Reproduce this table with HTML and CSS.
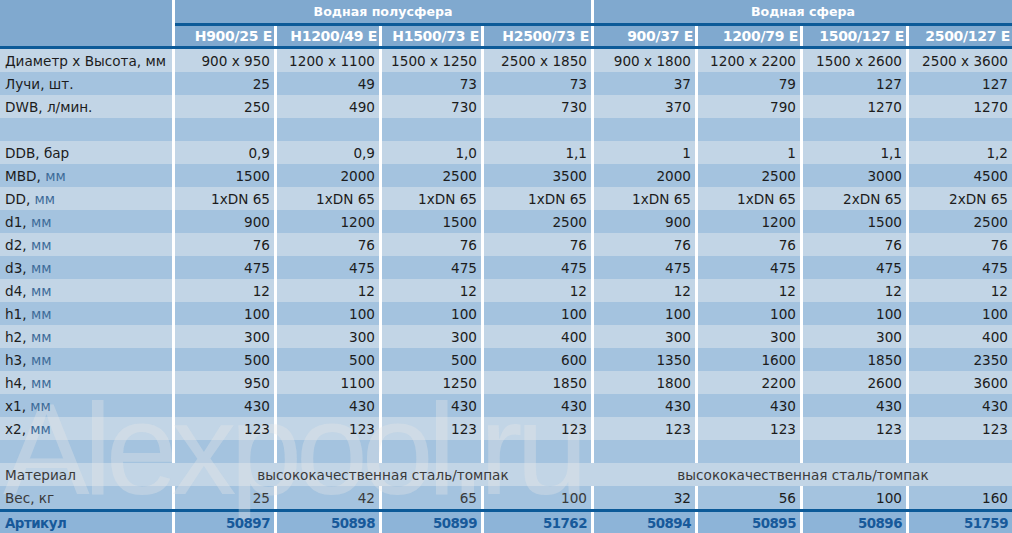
FILE: index.html
```html
<!DOCTYPE html>
<html lang="ru">
<head>
<meta charset="utf-8">
<title>Водная сфера</title>
<link rel="stylesheet" href="styles.css">
</head>
<body>
<div class="table">
  <div class="row head1">
    <div class="cell"></div>
    <div class="cell group g1"><span class="t">Водная полусфера</span></div>
    <div class="cell group g2"><span class="t">Водная сфера</span></div>
  </div>
  <div class="row line-partial">
    <div class="cell hdbg"></div>
    <div class="cell dark"></div>
  </div>
  <div class="row head2">
    <div class="cell"></div>
    <div class="cell"><span class="t">H900/25 E</span></div>
    <div class="cell"><span class="t">H1200/49 E</span></div>
    <div class="cell"><span class="t">H1500/73 E</span></div>
    <div class="cell"><span class="t">H2500/73 E</span></div>
    <div class="cell"><span class="t">900/37 E</span></div>
    <div class="cell"><span class="t">1200/79 E</span></div>
    <div class="cell"><span class="t">1500/127 E</span></div>
    <div class="cell"><span class="t">2500/127 E</span></div>
  </div>
  <div class="line"></div>

  <div class="row light">
    <div class="cell label"><span class="t">Диаметр x Высота, мм</span></div>
    <div class="cell"><span class="t">900 x 950</span></div>
    <div class="cell"><span class="t">1200 x 1100</span></div>
    <div class="cell"><span class="t">1500 x 1250</span></div>
    <div class="cell"><span class="t">2500 x 1850</span></div>
    <div class="cell"><span class="t">900 x 1800</span></div>
    <div class="cell"><span class="t">1200 x 2200</span></div>
    <div class="cell"><span class="t">1500 x 2600</span></div>
    <div class="cell"><span class="t">2500 x 3600</span></div>
  </div>
  <div class="row darkrow">
    <div class="cell label"><span class="t">Лучи, шт.</span></div>
    <div class="cell"><span class="t">25</span></div>
    <div class="cell"><span class="t">49</span></div>
    <div class="cell"><span class="t">73</span></div>
    <div class="cell"><span class="t">73</span></div>
    <div class="cell"><span class="t">37</span></div>
    <div class="cell"><span class="t">79</span></div>
    <div class="cell"><span class="t">127</span></div>
    <div class="cell"><span class="t">127</span></div>
  </div>
  <div class="row light">
    <div class="cell label"><span class="t">DWB, л/мин.</span></div>
    <div class="cell"><span class="t">250</span></div>
    <div class="cell"><span class="t">490</span></div>
    <div class="cell"><span class="t">730</span></div>
    <div class="cell"><span class="t">730</span></div>
    <div class="cell"><span class="t">370</span></div>
    <div class="cell"><span class="t">790</span></div>
    <div class="cell"><span class="t">1270</span></div>
    <div class="cell"><span class="t">1270</span></div>
  </div>
  <div class="row darkrow">
    <div class="cell label"></div>
    <div class="cell"></div><div class="cell"></div><div class="cell"></div><div class="cell"></div>
    <div class="cell"></div><div class="cell"></div><div class="cell"></div><div class="cell"></div>
  </div>
  <div class="row light">
    <div class="cell label"><span class="t">DDB, бар</span></div>
    <div class="cell"><span class="t">0,9</span></div>
    <div class="cell"><span class="t">0,9</span></div>
    <div class="cell"><span class="t">1,0</span></div>
    <div class="cell"><span class="t">1,1</span></div>
    <div class="cell"><span class="t">1</span></div>
    <div class="cell"><span class="t">1</span></div>
    <div class="cell"><span class="t">1,1</span></div>
    <div class="cell"><span class="t">1,2</span></div>
  </div>
  <div class="row darkrow">
    <div class="cell label"><span class="t">MBD, <span class="unit">мм</span></span></div>
    <div class="cell"><span class="t">1500</span></div>
    <div class="cell"><span class="t">2000</span></div>
    <div class="cell"><span class="t">2500</span></div>
    <div class="cell"><span class="t">3500</span></div>
    <div class="cell"><span class="t">2000</span></div>
    <div class="cell"><span class="t">2500</span></div>
    <div class="cell"><span class="t">3000</span></div>
    <div class="cell"><span class="t">4500</span></div>
  </div>
  <div class="row light">
    <div class="cell label"><span class="t">DD, <span class="unit">мм</span></span></div>
    <div class="cell"><span class="t">1xDN 65</span></div>
    <div class="cell"><span class="t">1xDN 65</span></div>
    <div class="cell"><span class="t">1xDN 65</span></div>
    <div class="cell"><span class="t">1xDN 65</span></div>
    <div class="cell"><span class="t">1xDN 65</span></div>
    <div class="cell"><span class="t">1xDN 65</span></div>
    <div class="cell"><span class="t">2xDN 65</span></div>
    <div class="cell"><span class="t">2xDN 65</span></div>
  </div>
  <div class="row darkrow">
    <div class="cell label"><span class="t">d1, <span class="unit">мм</span></span></div>
    <div class="cell"><span class="t">900</span></div>
    <div class="cell"><span class="t">1200</span></div>
    <div class="cell"><span class="t">1500</span></div>
    <div class="cell"><span class="t">2500</span></div>
    <div class="cell"><span class="t">900</span></div>
    <div class="cell"><span class="t">1200</span></div>
    <div class="cell"><span class="t">1500</span></div>
    <div class="cell"><span class="t">2500</span></div>
  </div>
  <div class="row light">
    <div class="cell label"><span class="t">d2, <span class="unit">мм</span></span></div>
    <div class="cell"><span class="t">76</span></div>
    <div class="cell"><span class="t">76</span></div>
    <div class="cell"><span class="t">76</span></div>
    <div class="cell"><span class="t">76</span></div>
    <div class="cell"><span class="t">76</span></div>
    <div class="cell"><span class="t">76</span></div>
    <div class="cell"><span class="t">76</span></div>
    <div class="cell"><span class="t">76</span></div>
  </div>
  <div class="row darkrow">
    <div class="cell label"><span class="t">d3, <span class="unit">мм</span></span></div>
    <div class="cell"><span class="t">475</span></div>
    <div class="cell"><span class="t">475</span></div>
    <div class="cell"><span class="t">475</span></div>
    <div class="cell"><span class="t">475</span></div>
    <div class="cell"><span class="t">475</span></div>
    <div class="cell"><span class="t">475</span></div>
    <div class="cell"><span class="t">475</span></div>
    <div class="cell"><span class="t">475</span></div>
  </div>
  <div class="row light">
    <div class="cell label"><span class="t">d4, <span class="unit">мм</span></span></div>
    <div class="cell"><span class="t">12</span></div>
    <div class="cell"><span class="t">12</span></div>
    <div class="cell"><span class="t">12</span></div>
    <div class="cell"><span class="t">12</span></div>
    <div class="cell"><span class="t">12</span></div>
    <div class="cell"><span class="t">12</span></div>
    <div class="cell"><span class="t">12</span></div>
    <div class="cell"><span class="t">12</span></div>
  </div>
  <div class="row darkrow">
    <div class="cell label"><span class="t">h1, <span class="unit">мм</span></span></div>
    <div class="cell"><span class="t">100</span></div>
    <div class="cell"><span class="t">100</span></div>
    <div class="cell"><span class="t">100</span></div>
    <div class="cell"><span class="t">100</span></div>
    <div class="cell"><span class="t">100</span></div>
    <div class="cell"><span class="t">100</span></div>
    <div class="cell"><span class="t">100</span></div>
    <div class="cell"><span class="t">100</span></div>
  </div>
  <div class="row light">
    <div class="cell label"><span class="t">h2, <span class="unit">мм</span></span></div>
    <div class="cell"><span class="t">300</span></div>
    <div class="cell"><span class="t">300</span></div>
    <div class="cell"><span class="t">300</span></div>
    <div class="cell"><span class="t">400</span></div>
    <div class="cell"><span class="t">300</span></div>
    <div class="cell"><span class="t">300</span></div>
    <div class="cell"><span class="t">300</span></div>
    <div class="cell"><span class="t">400</span></div>
  </div>
  <div class="row darkrow">
    <div class="cell label"><span class="t">h3, <span class="unit">мм</span></span></div>
    <div class="cell"><span class="t">500</span></div>
    <div class="cell"><span class="t">500</span></div>
    <div class="cell"><span class="t">500</span></div>
    <div class="cell"><span class="t">600</span></div>
    <div class="cell"><span class="t">1350</span></div>
    <div class="cell"><span class="t">1600</span></div>
    <div class="cell"><span class="t">1850</span></div>
    <div class="cell"><span class="t">2350</span></div>
  </div>
  <div class="row light">
    <div class="cell label"><span class="t">h4, <span class="unit">мм</span></span></div>
    <div class="cell"><span class="t">950</span></div>
    <div class="cell"><span class="t">1100</span></div>
    <div class="cell"><span class="t">1250</span></div>
    <div class="cell"><span class="t">1850</span></div>
    <div class="cell"><span class="t">1800</span></div>
    <div class="cell"><span class="t">2200</span></div>
    <div class="cell"><span class="t">2600</span></div>
    <div class="cell"><span class="t">3600</span></div>
  </div>
  <div class="row darkrow">
    <div class="cell label"><span class="t">x1, <span class="unit">мм</span></span></div>
    <div class="cell"><span class="t">430</span></div>
    <div class="cell"><span class="t">430</span></div>
    <div class="cell"><span class="t">430</span></div>
    <div class="cell"><span class="t">430</span></div>
    <div class="cell"><span class="t">430</span></div>
    <div class="cell"><span class="t">430</span></div>
    <div class="cell"><span class="t">430</span></div>
    <div class="cell"><span class="t">430</span></div>
  </div>
  <div class="row light">
    <div class="cell label"><span class="t">x2, <span class="unit">мм</span></span></div>
    <div class="cell"><span class="t">123</span></div>
    <div class="cell"><span class="t">123</span></div>
    <div class="cell"><span class="t">123</span></div>
    <div class="cell"><span class="t">123</span></div>
    <div class="cell"><span class="t">123</span></div>
    <div class="cell"><span class="t">123</span></div>
    <div class="cell"><span class="t">123</span></div>
    <div class="cell"><span class="t">123</span></div>
  </div>
  <div class="row darkrow">
    <div class="cell label"></div>
    <div class="cell"></div><div class="cell"></div><div class="cell"></div><div class="cell"></div>
    <div class="cell"></div><div class="cell"></div><div class="cell"></div><div class="cell"></div>
  </div>
  <div class="row light material">
    <div class="cell label gray"><span class="t">Материал</span></div>
    <div class="cell span1 center gray"><span class="t">высококачественная сталь/томпак</span></div>
    <div class="cell span2 center gray"><span class="t">высококачественная сталь/томпак</span></div>
  </div>
  <div class="row darkrow">
    <div class="cell label gray"><span class="t">Вес, кг</span></div>
    <div class="cell gray"><span class="t">25</span></div>
    <div class="cell gray"><span class="t">42</span></div>
    <div class="cell gray"><span class="t">65</span></div>
    <div class="cell gray"><span class="t">100</span></div>
    <div class="cell"><span class="t">32</span></div>
    <div class="cell"><span class="t">56</span></div>
    <div class="cell"><span class="t">100</span></div>
    <div class="cell"><span class="t">160</span></div>
  </div>
  <div class="line"></div>
  <div class="row article">
    <div class="cell label"><span class="t">Артикул</span></div>
    <div class="cell"><span class="t">50897</span></div>
    <div class="cell"><span class="t">50898</span></div>
    <div class="cell"><span class="t">50899</span></div>
    <div class="cell"><span class="t">51762</span></div>
    <div class="cell"><span class="t">50894</span></div>
    <div class="cell"><span class="t">50895</span></div>
    <div class="cell"><span class="t">50896</span></div>
    <div class="cell"><span class="t">51759</span></div>
  </div>
  <div class="line bottom"></div>

  <div class="watermark">Alexpool.ru</div>
</div>
</body>
</html>
```

FILE: styles.css
```css
html, body {
  margin: 0;
  padding: 0;
  background: #ffffff;
}

.table {
  position: relative;
  width: 1012px;
  height: 533px;
  overflow: hidden;
  font-family: "DejaVu Sans", Verdana, sans-serif;
  font-size: 13.6px;
  color: #1c1c1c;
}

.row {
  display: grid;
  grid-template-columns: 172px 99px 102px 99px 107px 101px 102px 103px 103px;
  column-gap: 3px;
  height: 23px;
  background: #ffffff;
}

.cell {
  display: flex;
  align-items: center;
  justify-content: flex-end;
  padding: 0 4px 0 0;
  white-space: nowrap;
  overflow: hidden;
}

.t {
  position: relative;
  z-index: 2;
}

.cell.label {
  justify-content: flex-start;
  padding: 0 0 0 5px;
}

.unit {
  color: #3e6c99;
}

.light .cell { background: #c2d5e6; }
.darkrow .cell { background: #a4c3df; }

.head1 {
  height: 23px;
}
.head1 .cell {
  background: #80a9cf;
  color: #ffffff;
  font-weight: bold;
  font-size: 12.6px;
}
.head1 .group {
  justify-content: center;
  padding: 0 0 1px 0;
}
.head1 .g1 { grid-column: 2 / 6; }
.head1 .g2 { grid-column: 6 / 10; }

.line-partial {
  height: 3px;
}
.line-partial .hdbg { background: #80a9cf; }
.line-partial .dark {
  grid-column: 2 / 10;
  background: #0c5a98;
}

.head2 {
  height: 20px;
}
.head2 .cell {
  background: #80a9cf;
  color: #ffffff;
  font-weight: bold;
  font-size: 14px;
  letter-spacing: -0.3px;
  padding-right: 2px;
}

.line {
  height: 3px;
  background: #0c5a98;
}
.line.bottom {
  height: 2px;
}

.material {
  background: #c2d5e6;
}
.material .span1 { grid-column: 2 / 6; }
.material .span2 { grid-column: 6 / 10; }
.cell.center {
  justify-content: center;
  padding: 0;
}

.gray { color: #3a3a3a; }

.article .cell {
  background: #8db4d8;
  color: #17599a;
  font-weight: bold;
  font-size: 13.4px;
  letter-spacing: -0.5px;
}

.watermark {
  position: absolute;
  left: 3px;
  top: 384px;
  z-index: 1;
  font-family: "Liberation Sans", Arial, sans-serif;
  font-size: 130px;
  letter-spacing: -6.5px;
  line-height: 1;
  color: rgba(232, 232, 232, 0.34);
  pointer-events: none;
  white-space: nowrap;
}
```
